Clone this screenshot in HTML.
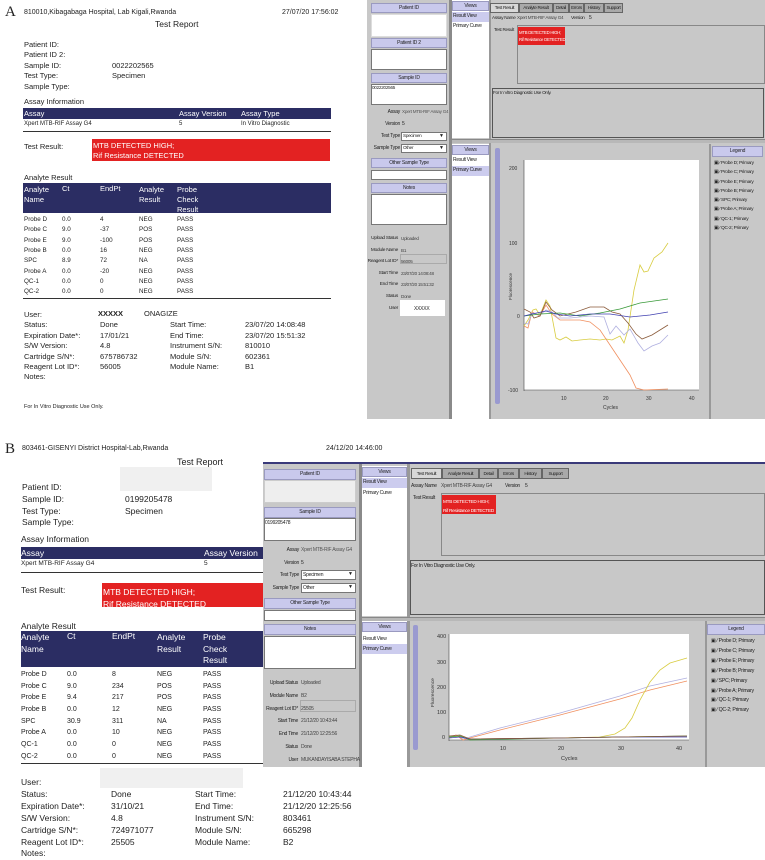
<!DOCTYPE html>
<html><head><meta charset="utf-8"><style>
*{margin:0;padding:0;box-sizing:border-box}
body{width:765px;height:860px;background:#fff;position:relative;overflow:hidden;font-family:"Liberation Sans",Arial,sans-serif;color:#222}
.a{position:absolute;white-space:nowrap;line-height:1}
.s{font-size:7px}
.m{font-size:7.5px}
.b{font-size:8.5px}
.bar{position:absolute;background:#2b2d63;color:#fff}
.red{position:absolute;background:#e32222;color:#fff}
.g{position:absolute;background:#c8c8c8}
.w{position:absolute;background:#fff;border:1px solid #777}
.h{position:absolute;background:#c9c9ec;border:1px solid #9a9ac0;font-size:5px;letter-spacing:-0.2px;text-align:center;color:#222;white-space:nowrap;overflow:hidden}
.n{font-size:5px;letter-spacing:-0.25px;color:#222}
.hl{position:absolute;background:#ccccee}
.tab{position:absolute;background:#a9a9a9;border:1px solid #666;font-size:4.6px;letter-spacing:-0.3px;text-align:center;white-space:nowrap;overflow:hidden}
.dd{position:absolute;background:#fff;border:1px solid #777}
.dd:after{content:"▼";position:absolute;right:2px;top:0;font-size:5px}
</style></head><body>

<!-- ================= PANEL A REPORT ================= -->
<div class="a" style="left:5px;top:5px;font-family:'Liberation Serif',serif;font-size:15px">A</div>
<div class="a s" style="left:24px;top:9px">810010,Kibagabaga Hospital, Lab Kigali,Rwanda</div>
<div class="a s" style="left:282px;top:9px">27/07/20 17:56:02</div>
<div class="a" style="left:155px;top:20px;font-size:8.5px">Test Report</div>
<div class="a m" style="left:24px;top:41px">Patient ID:</div>
<div class="a m" style="left:24px;top:51px">Patient ID 2:</div>
<div class="a m" style="left:24px;top:62px">Sample ID:</div><div class="a m" style="left:112px;top:62px">0022202565</div>
<div class="a m" style="left:24px;top:72px">Test Type:</div><div class="a m" style="left:112px;top:72px">Specimen</div>
<div class="a m" style="left:24px;top:83px">Sample Type:</div>
<div class="a m" style="left:24px;top:98px">Assay Information</div>
<div class="bar" style="left:23px;top:108px;width:308px;height:11px"></div>
<div class="a m" style="left:24px;top:110px;color:#fff">Assay</div>
<div class="a m" style="left:179px;top:110px;color:#fff">Assay Version</div>
<div class="a m" style="left:241px;top:110px;color:#fff">Assay Type</div>
<div class="a" style="left:24px;top:121px;font-size:6px">Xpert MTB-RIF Assay G4</div>
<div class="a" style="left:179px;top:121px;font-size:6px">5</div>
<div class="a" style="left:241px;top:121px;font-size:6px">In Vitro Diagnostic</div>
<div style="position:absolute;left:23px;top:131px;width:308px;height:1px;background:#333"></div>
<div class="a m" style="left:24px;top:143px">Test Result:</div>
<div class="red" style="left:92px;top:139px;width:238px;height:22px"></div>
<div class="a m" style="left:93px;top:142px;color:#fff">MTB DETECTED HIGH;</div>
<div class="a m" style="left:93px;top:152px;color:#fff">Rif Resistance DETECTED</div>
<div class="a m" style="left:24px;top:174px">Analyte Result</div>
<div class="bar" style="left:23px;top:183px;width:308px;height:30px"></div>
<div class="a m" style="left:24px;top:185px;color:#fff;line-height:10px">Analyte<br>Name</div>
<div class="a m" style="left:62px;top:185px;color:#fff">Ct</div>
<div class="a m" style="left:100px;top:185px;color:#fff">EndPt</div>
<div class="a m" style="left:139px;top:185px;color:#fff;line-height:10px">Analyte<br>Result</div>
<div class="a m" style="left:177px;top:185px;color:#fff;line-height:10px">Probe<br>Check<br>Result</div>
<div class="a" style="left:24px;top:215px;font-size:6.3px;line-height:10.35px">Probe D<br>Probe C<br>Probe E<br>Probe B<br>SPC<br>Probe A<br>QC-1<br>QC-2</div>
<div class="a" style="left:62px;top:215px;font-size:6.3px;line-height:10.35px">0.0<br>9.0<br>9.0<br>0.0<br>8.9<br>0.0<br>0.0<br>0.0</div>
<div class="a" style="left:100px;top:215px;font-size:6.3px;line-height:10.35px">4<br>-37<br>-100<br>16<br>72<br>-20<br>0<br>0</div>
<div class="a" style="left:139px;top:215px;font-size:6.3px;line-height:10.35px">NEG<br>POS<br>POS<br>NEG<br>NA<br>NEG<br>NEG<br>NEG</div>
<div class="a" style="left:177px;top:215px;font-size:6.3px;line-height:10.35px">PASS<br>PASS<br>PASS<br>PASS<br>PASS<br>PASS<br>PASS<br>PASS</div>
<div style="position:absolute;left:23px;top:298px;width:308px;height:1px;background:#333"></div>
<div class="a m" style="left:24px;top:310px;line-height:10.4px">User:<br>Status:<br>Expiration Date*:<br>S/W Version:<br>Cartridge S/N*:<br>Reagent Lot ID*:<br>Notes:</div>
<div class="a m" style="left:98px;top:310px;font-weight:bold">XXXXX</div>
<div class="a m" style="left:144px;top:310px">ONAGIZE</div>
<div class="a m" style="left:100px;top:320.4px;line-height:10.4px">Done<br>17/01/21<br>4.8<br>675786732<br>56005</div>
<div class="a m" style="left:170px;top:320.4px;line-height:10.4px">Start Time:<br>End Time:<br>Instrument S/N:<br>Module S/N:<br>Module Name:</div>
<div class="a m" style="left:245px;top:320.4px;line-height:10.4px">23/07/20 14:08:48<br>23/07/20 15:51:32<br>810010<br>602361<br>B1</div>
<div class="a" style="left:24px;top:405px;font-size:5.5px">For In Vitro Diagnostic Use Only.</div>

<!-- ================= PANEL A GUI ================= -->
<div class="g" style="left:367px;top:0;width:398px;height:419px"></div>
<div style="position:absolute;left:449px;top:0;width:3px;height:419px;background:#8a8a8a"></div>
<div class="h" style="left:371px;top:3px;width:76px;height:10px;line-height:8px">Patient ID</div>
<div class="w" style="left:371px;top:14px;width:76px;height:23px;border-color:#ddd"></div>
<div class="h" style="left:371px;top:38px;width:76px;height:10px;line-height:8px">Patient ID 2</div>
<div class="w" style="left:371px;top:49px;width:76px;height:21px"></div>
<div class="h" style="left:371px;top:73px;width:76px;height:10px;line-height:8px">Sample ID</div>
<div class="w" style="left:371px;top:84px;width:76px;height:21px"></div>
<div class="a n" style="left:372px;top:86px;font-size:4.6px">0022202565</div>
<div class="a n" style="left:360px;top:110px;width:40px;text-align:right">Assay</div><div class="a n" style="left:402px;top:110px;color:#555;font-size:4.6px">Xpert MTB-RIF Assay G4</div>
<div class="a n" style="left:360px;top:122px;width:40px;text-align:right">Version</div><div class="a n" style="left:402px;top:122px">5</div>
<div class="a n" style="left:360px;top:134px;width:40px;text-align:right">Test Type</div>
<div class="dd" style="left:401px;top:132px;width:46px;height:9px"></div><div class="a n" style="left:403px;top:134px;font-size:4.6px">Specimen</div>
<div class="a n" style="left:360px;top:146px;width:40px;text-align:right">Sample Type</div>
<div class="dd" style="left:401px;top:144px;width:46px;height:9px"></div><div class="a n" style="left:403px;top:146px;font-size:4.6px">Other</div>
<div class="h" style="left:371px;top:158px;width:76px;height:10px;line-height:8px">Other Sample Type</div>
<div class="w" style="left:371px;top:170px;width:76px;height:10px"></div>
<div class="h" style="left:371px;top:183px;width:76px;height:10px;line-height:8px">Notes</div>
<div class="w" style="left:371px;top:194px;width:76px;height:31px"></div>
<div class="a n" style="left:358px;top:233px;width:40px;text-align:right;line-height:11.6px;font-size:4.8px">Upload Status<br>Module Name<br>Reagent Lot ID*<br>Start Time<br>End Time<br>Status<br>User</div>
<div class="a n" style="left:401px;top:233px;line-height:11.6px;color:#444;font-size:4.6px">Uploaded<br>B1<br>56005<br>23/07/20 14:08:48<br>23/07/20 15:51:32<br>Done</div>
<div style="position:absolute;left:400px;top:254px;width:47px;height:10px;border:1px solid #aaa"></div>
<div class="w" style="left:400px;top:300px;width:45px;height:16px;border:none"></div>
<div class="a n" style="left:414px;top:307px">XXXXX</div>
<!-- views A -->
<div style="position:absolute;left:452px;top:0;width:37px;height:138px;background:#fff"></div>
<div class="h" style="left:452px;top:1px;width:37px;height:10px;line-height:8px">Views</div>
<div class="hl" style="left:452px;top:12px;width:37px;height:10px"></div>
<div class="a n" style="left:453px;top:14px">Result View</div>
<div class="a n" style="left:453px;top:24px">Primary Curve</div>
<div style="position:absolute;left:489px;top:0;width:2px;height:419px;background:#999"></div>
<div class="tab" style="left:490px;top:3px;width:29px;height:10px;background:#d8d8d8;line-height:8px">Test Result</div>
<div class="tab" style="left:519px;top:3px;width:34px;height:10px;line-height:8px">Analyte Result</div>
<div class="tab" style="left:553px;top:3px;width:16px;height:10px;line-height:8px">Detail</div>
<div class="tab" style="left:569px;top:3px;width:15px;height:10px;line-height:8px">Errors</div>
<div class="tab" style="left:584px;top:3px;width:20px;height:10px;line-height:8px">History</div>
<div class="tab" style="left:604px;top:3px;width:19px;height:10px;line-height:8px">Support</div>
<div class="a n" style="left:492px;top:16px;font-size:4.6px">Assay Name</div><div class="a n" style="left:517px;top:16px;color:#444;font-size:4.6px">Xpert MTB-RIF Assay G4</div>
<div class="a n" style="left:571px;top:16px;font-size:4.6px">Version</div><div class="a n" style="left:589px;top:16px">5</div>
<div class="a n" style="left:494px;top:28px;font-size:4.6px">Test Result</div>
<div style="position:absolute;left:517px;top:25px;width:248px;height:59px;border:1px solid #888"></div>
<div class="red" style="left:518px;top:27px;width:47px;height:18px"></div>
<div class="a n" style="left:519px;top:29px;color:#fff;font-size:4.3px;line-height:7px">MTB DETECTED HIGH;<br>Rif Resistance DETECTED</div>
<div style="position:absolute;left:492px;top:88px;width:272px;height:50px;border:1px solid #555"></div>
<div class="a n" style="left:493px;top:91px;font-size:4.6px">For In Vitro Diagnostic Use Only.</div>
<div style="position:absolute;left:452px;top:139px;width:313px;height:4px;background:#b8b8b8;border-top:1px solid #888"></div>
<div style="position:absolute;left:452px;top:144px;width:37px;height:275px;background:#fff"></div>
<div class="h" style="left:452px;top:145px;width:37px;height:10px;line-height:8px">Views</div>
<div class="a n" style="left:453px;top:158px">Result View</div>
<div class="hl" style="left:452px;top:166px;width:37px;height:10px"></div>
<div class="a n" style="left:453px;top:168px">Primary Curve</div>
<div style="position:absolute;left:495px;top:148px;width:5px;height:256px;background:#9a9ad0;border-radius:2px"></div>
<div style="position:absolute;left:709px;top:144px;width:2px;height:275px;background:#999"></div>
<div class="h" style="left:712px;top:146px;width:51px;height:11px;line-height:9px">Legend</div>
<div class="a n" style="left:714px;top:159px;line-height:9.3px;font-size:4.8px">▣ ⁄ Probe D; Primary<br>▣ ⁄ Probe C; Primary<br>▣ ⁄ Probe E; Primary<br>▣ ⁄ Probe B; Primary<br>▣ ⁄ SPC; Primary<br>▣ ⁄ Probe A; Primary<br>▣ ⁄ QC-1; Primary<br>▣ ⁄ QC-2; Primary</div>
<svg style="position:absolute;left:0;top:0" width="765" height="430" viewBox="0 0 765 430">
<rect x="524" y="160" width="175" height="230" fill="#fff"/>
<line x1="524" y1="160" x2="524" y2="391" stroke="#444" stroke-width=".6"/>
<line x1="524" y1="390" x2="699" y2="390" stroke="#444" stroke-width=".6"/>
<g font-size="5" font-family="Liberation Sans" fill="#333">
<text x="509" y="170">200</text><text x="509" y="245">100</text><text x="517" y="318">0</text><text x="508" y="392">-100</text>
<text x="561" y="400">10</text><text x="603" y="400">20</text><text x="646" y="400">30</text><text x="689" y="400">40</text>
<text x="603" y="409">Cycles</text>
<text transform="translate(512,300) rotate(-90)" font-size="4.5">Fluorescence</text></g>
<g fill="none" stroke-width=".8">
<polyline stroke="#d8cc40" points="524,326 528,320 533,310 536,309 540,315 546,300 550,306 556,338 560,340 566,337 572,341 580,340 590,339 600,340 606,339 612,340 620,336 624,343 628,330 634,290 640,265 644,272 648,271 654,258 662,252 668,243"/>
<polyline stroke="#f09060" points="524,326 528,328 532,312 540,316 546,305 552,314 560,320 580,320 590,322 600,330 610,345 620,360 630,375 636,388 644,390 668,389"/>
<polyline stroke="#b0b0e0" points="524,323 528,324 532,313 540,315 546,310 552,312 558,318 570,318 590,316 604,317 610,334 616,326 624,335 630,329 638,343 644,351 652,346 660,343 668,335"/>
<polyline stroke="#8a5a3a" points="524,309 530,312 534,318 540,316 546,302 552,310 560,316 576,312 590,307 604,307 612,312 620,314 628,323 636,334 642,339 652,335 668,325"/>
<polyline stroke="#3a9a3a" points="524,316 540,314 560,313 580,316 600,313 620,309 640,303 668,299"/>
<polyline stroke="#4040b0" points="524,316 532,314 546,311 556,314 570,316 590,314 610,314 630,317 650,315 668,312"/>
</g></svg>

<!-- ================= PANEL B REPORT ================= -->
<div class="a" style="left:5px;top:442px;font-family:'Liberation Serif',serif;font-size:15px">B</div>
<div class="a s" style="left:22px;top:445px">803461-GISENYI District Hospital-Lab,Rwanda</div>
<div class="a s" style="left:326px;top:445px">24/12/20 14:46:00</div>
<div class="a" style="left:177px;top:458px;font-size:9px">Test Report</div>
<div style="position:absolute;left:120px;top:467px;width:92px;height:24px;background:#f0f0f0"></div>
<div class="a b" style="left:22px;top:482px;line-height:11.8px">Patient ID:<br>Sample ID:<br>Test Type:<br>Sample Type:</div>
<div class="a b" style="left:125px;top:493.8px;line-height:11.8px">0199205478<br>Specimen</div>
<div class="a b" style="left:21px;top:535px">Assay Information</div>
<div class="bar" style="left:21px;top:547px;width:242px;height:12px"></div>
<div class="a b" style="left:21px;top:549px;color:#fff">Assay</div>
<div class="a b" style="left:204px;top:549px;color:#fff">Assay Version</div>
<div class="a" style="left:21px;top:561px;font-size:6.5px">Xpert MTB-RIF Assay G4</div>
<div class="a" style="left:204px;top:561px;font-size:6.5px">5</div>
<div style="position:absolute;left:21px;top:572px;width:242px;height:1px;background:#333"></div>
<div class="a b" style="left:21px;top:586px">Test Result:</div>
<div class="red" style="left:102px;top:583px;width:161px;height:24px"></div>
<div class="a b" style="left:103px;top:586px;color:#fff;line-height:12px">MTB DETECTED HIGH;<br>Rif Resistance DETECTED</div>
<div class="a b" style="left:21px;top:622px">Analyte Result</div>
<div class="bar" style="left:21px;top:631px;width:242px;height:36px"></div>
<div class="a b" style="left:21px;top:632px;color:#fff;line-height:11.5px">Analyte<br>Name</div>
<div class="a b" style="left:67px;top:632px;color:#fff">Ct</div>
<div class="a b" style="left:112px;top:632px;color:#fff">EndPt</div>
<div class="a b" style="left:157px;top:632px;color:#fff;line-height:11.5px">Analyte<br>Result</div>
<div class="a b" style="left:203px;top:632px;color:#fff;line-height:11.5px">Probe<br>Check<br>Result</div>
<div class="a" style="left:21px;top:669px;font-size:7px;line-height:11.65px">Probe D<br>Probe C<br>Probe E<br>Probe B<br>SPC<br>Probe A<br>QC-1<br>QC-2</div>
<div class="a" style="left:67px;top:669px;font-size:7px;line-height:11.65px">0.0<br>9.0<br>9.4<br>0.0<br>30.9<br>0.0<br>0.0<br>0.0</div>
<div class="a" style="left:112px;top:669px;font-size:7px;line-height:11.65px">8<br>234<br>217<br>12<br>311<br>10<br>0<br>0</div>
<div class="a" style="left:157px;top:669px;font-size:7px;line-height:11.65px">NEG<br>POS<br>POS<br>NEG<br>NA<br>NEG<br>NEG<br>NEG</div>
<div class="a" style="left:203px;top:669px;font-size:7px;line-height:11.65px">PASS<br>PASS<br>PASS<br>PASS<br>PASS<br>PASS<br>PASS<br>PASS</div>
<div style="position:absolute;left:21px;top:763px;width:242px;height:1px;background:#333"></div>
<div style="position:absolute;left:100px;top:768px;width:143px;height:20px;background:#f0f0f0"></div>
<div class="a b" style="left:21px;top:777px;line-height:11.9px">User:<br>Status:<br>Expiration Date*:<br>S/W Version:<br>Cartridge S/N*:<br>Reagent Lot ID*:<br>Notes:</div>
<div class="a b" style="left:111px;top:788.9px;line-height:11.9px">Done<br>31/10/21<br>4.8<br>724971077<br>25505</div>
<div class="a b" style="left:195px;top:788.9px;line-height:11.9px">Start Time:<br>End Time:<br>Instrument S/N:<br>Module S/N:<br>Module Name:</div>
<div class="a b" style="left:283px;top:788.9px;line-height:11.9px">21/12/20 10:43:44<br>21/12/20 12:25:56<br>803461<br>665298<br>B2</div>

<!-- ================= PANEL B GUI ================= -->
<div class="g" style="left:263px;top:462px;width:502px;height:305px"></div>
<div style="position:absolute;left:263px;top:462px;width:502px;height:2px;background:#3a3a7a"></div>
<div style="position:absolute;left:359px;top:464px;width:3px;height:303px;background:#8a8a8a"></div>
<div class="h" style="left:264px;top:469px;width:92px;height:11px;line-height:9px">Patient ID</div>
<div class="w" style="left:264px;top:480px;width:92px;height:23px;background:#eee;border-color:#ccc"></div>
<div class="h" style="left:264px;top:507px;width:92px;height:11px;line-height:9px">Sample ID</div>
<div class="w" style="left:264px;top:518px;width:92px;height:23px"></div>
<div class="a n" style="left:265px;top:521px">0199205478</div>
<div class="a n" style="left:259px;top:548px;width:40px;text-align:right">Assay</div><div class="a n" style="left:301px;top:548px;color:#555">Xpert MTB-RIF Assay G4</div>
<div class="a n" style="left:259px;top:561px;width:40px;text-align:right">Version</div><div class="a n" style="left:301px;top:561px">5</div>
<div class="a n" style="left:259px;top:573px;width:40px;text-align:right">Test Type</div>
<div class="dd" style="left:301px;top:570px;width:55px;height:10px"></div><div class="a n" style="left:303px;top:573px">Specimen</div>
<div class="a n" style="left:259px;top:586px;width:40px;text-align:right">Sample Type</div>
<div class="dd" style="left:301px;top:583px;width:55px;height:10px"></div><div class="a n" style="left:303px;top:586px">Other</div>
<div class="h" style="left:264px;top:598px;width:92px;height:11px;line-height:9px">Other Sample Type</div>
<div class="w" style="left:264px;top:610px;width:92px;height:11px"></div>
<div class="h" style="left:264px;top:624px;width:92px;height:11px;line-height:9px">Notes</div>
<div class="w" style="left:264px;top:636px;width:92px;height:33px"></div>
<div class="a n" style="left:258px;top:677px;width:40px;text-align:right;line-height:12.8px">Upload Status<br>Module Name<br>Reagent Lot ID*<br>Start Time<br>End Time<br>Status<br>User</div>
<div class="a n" style="left:301px;top:677px;line-height:12.8px;color:#444">Uploaded<br>B2<br>25505<br>21/12/20 10:43:44<br>21/12/20 12:25:56<br>Done<br>MUKANDAYISABA STEPHA</div>
<div style="position:absolute;left:300px;top:700px;width:56px;height:12px;border:1px solid #aaa"></div>
<div style="position:absolute;left:362px;top:466px;width:45px;height:150px;background:#fff"></div>
<div class="h" style="left:362px;top:467px;width:45px;height:10px;line-height:8px">Views</div>
<div class="hl" style="left:362px;top:478px;width:45px;height:10px"></div>
<div class="a n" style="left:363px;top:480px">Result View</div>
<div class="a n" style="left:363px;top:491px">Primary Curve</div>
<div style="position:absolute;left:407px;top:464px;width:3px;height:303px;background:#999"></div>
<div class="tab" style="left:411px;top:468px;width:31px;height:11px;background:#d8d8d8;line-height:9px">Test Result</div>
<div class="tab" style="left:442px;top:468px;width:37px;height:11px;line-height:9px">Analyte Result</div>
<div class="tab" style="left:479px;top:468px;width:19px;height:11px;line-height:9px">Detail</div>
<div class="tab" style="left:498px;top:468px;width:21px;height:11px;line-height:9px">Errors</div>
<div class="tab" style="left:519px;top:468px;width:23px;height:11px;line-height:9px">History</div>
<div class="tab" style="left:542px;top:468px;width:27px;height:11px;line-height:9px">Support</div>
<div class="a n" style="left:411px;top:484px">Assay Name</div><div class="a n" style="left:441px;top:484px;color:#444">Xpert MTB-RIF Assay G4</div>
<div class="a n" style="left:505px;top:484px">Version</div><div class="a n" style="left:525px;top:484px">5</div>
<div class="a n" style="left:413px;top:496px">Test Result</div>
<div style="position:absolute;left:441px;top:493px;width:324px;height:63px;border:1px solid #888"></div>
<div class="red" style="left:442px;top:495px;width:54px;height:19px"></div>
<div class="a n" style="left:443px;top:497px;color:#fff;line-height:9px;font-size:4.7px">MTB DETECTED HIGH;<br>Rif Resistance DETECTED</div>
<div style="position:absolute;left:410px;top:560px;width:355px;height:55px;border:1px solid #555"></div>
<div class="a n" style="left:411px;top:564px">For In Vitro Diagnostic Use Only.</div>
<div style="position:absolute;left:362px;top:617px;width:403px;height:4px;background:#b8b8b8;border-top:1px solid #888"></div>
<div style="position:absolute;left:362px;top:621px;width:45px;height:146px;background:#fff"></div>
<div class="h" style="left:362px;top:622px;width:45px;height:10px;line-height:8px">Views</div>
<div class="a n" style="left:363px;top:637px">Result View</div>
<div class="hl" style="left:362px;top:644px;width:45px;height:10px"></div>
<div class="a n" style="left:363px;top:647px">Primary Curve</div>
<div style="position:absolute;left:413px;top:625px;width:5px;height:125px;background:#9a9ad0;border-radius:2px"></div>
<div style="position:absolute;left:705px;top:621px;width:2px;height:146px;background:#999"></div>
<div class="h" style="left:707px;top:624px;width:58px;height:11px;line-height:9px">Legend</div>
<div class="a n" style="left:711px;top:637px;line-height:9.9px;font-size:5.2px">▣ ⁄ Probe D; Primary<br>▣ ⁄ Probe C; Primary<br>▣ ⁄ Probe E; Primary<br>▣ ⁄ Probe B; Primary<br>▣ ⁄ SPC; Primary<br>▣ ⁄ Probe A; Primary<br>▣ ⁄ QC-1; Primary<br>▣ ⁄ QC-2; Primary</div>
<svg style="position:absolute;left:0;top:600px" width="765" height="170" viewBox="0 600 765 170">
<rect x="449" y="634" width="240" height="106" fill="#fff"/>
<line x1="449" y1="634" x2="449" y2="741" stroke="#444" stroke-width=".6"/>
<line x1="449" y1="740" x2="689" y2="740" stroke="#444" stroke-width=".6"/>
<g font-size="5.5" font-family="Liberation Sans" fill="#333">
<text x="437" y="638">400</text><text x="437" y="664">300</text><text x="437" y="689">200</text><text x="437" y="714">100</text><text x="442" y="739">0</text>
<text x="500" y="750">10</text><text x="558" y="750">20</text><text x="618" y="750">30</text><text x="676" y="750">40</text>
<text x="561" y="760">Cycles</text>
<text transform="translate(434,707) rotate(-90)" font-size="4.8">Fluorescence</text></g>
<g fill="none" stroke-width=".8">
<polyline stroke="#b0b0e0" points="449,737 456,735 463,739 470,737 500,728 560,713 620,696 650,686 687,678"/>
<polyline stroke="#f09060" points="449,738 456,735 463,740 470,738 500,730 560,715 620,699 650,690 687,681"/>
<polyline stroke="#d8cc40" points="449,737 460,736 470,739 560,738 600,737 615,734 625,728 632,718 640,700 650,682 660,670 670,663 687,658"/>
<polyline stroke="#3a9a3a" points="449,737 460,736 470,740 560,738 620,737 687,736"/>
<polyline stroke="#4040b0" points="449,738 460,737 470,739 560,738 620,737 687,737"/>
<polyline stroke="#8a5a3a" points="449,736 460,735 470,739 560,738 620,737 687,736"/>
</g></svg>
</body></html>
